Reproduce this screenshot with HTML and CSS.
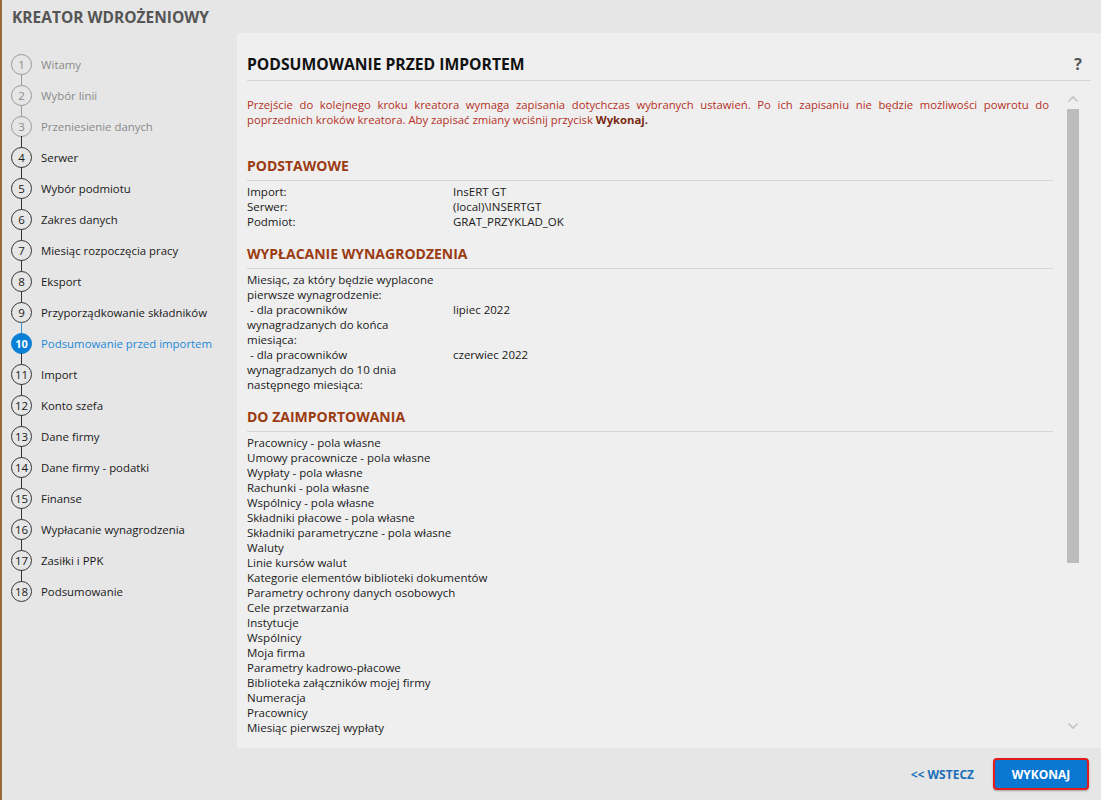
FILE: index.html
```html
<!DOCTYPE html>
<html lang="pl">
<head>
  <meta charset="UTF-8" />
  <title>Kreator wdrożeniowy</title>
  <link rel="stylesheet" href="styles.css">
</head>
<body>
  <div class="app">
    <header class="titlebar">KREATOR WDROŻENIOWY</header>

    <nav class="sidebar">
      <ul class="steps">
        <li class="step done"><span class="num">1</span>Witamy</li>
        <li class="step done"><span class="num">2</span>Wybór linii</li>
        <li class="step done last-done"><span class="num">3</span>Przeniesienie danych</li>
        <li class="step"><span class="num">4</span>Serwer</li>
        <li class="step"><span class="num">5</span>Wybór podmiotu</li>
        <li class="step"><span class="num">6</span>Zakres danych</li>
        <li class="step"><span class="num">7</span>Miesiąc rozpoczęcia pracy</li>
        <li class="step"><span class="num">8</span>Eksport</li>
        <li class="step before-active"><span class="num">9</span>Przyporządkowanie składników</li>
        <li class="step active"><span class="num">10</span>Podsumowanie przed importem</li>
        <li class="step"><span class="num">11</span>Import</li>
        <li class="step"><span class="num">12</span>Konto szefa</li>
        <li class="step"><span class="num">13</span>Dane firmy</li>
        <li class="step"><span class="num">14</span>Dane firmy - podatki</li>
        <li class="step"><span class="num">15</span>Finanse</li>
        <li class="step"><span class="num">16</span>Wypłacanie wynagrodzenia</li>
        <li class="step"><span class="num">17</span>Zasiłki i PPK</li>
        <li class="step"><span class="num">18</span>Podsumowanie</li>
      </ul>
    </nav>

    <main class="panel">
      <div class="panel-head">
        <h2>PODSUMOWANIE PRZED IMPORTEM</h2>
        <span class="help">?</span>
      </div>

      <div class="panel-body">
        <div class="scroll">
          <p class="notice">Przejście do kolejnego kroku kreatora wymaga zapisania dotychczas wybranych ustawień. Po ich zapisaniu nie będzie możliwości powrotu do poprzednich kroków kreatora. Aby zapisać zmiany wciśnij przycisk <strong>Wykonaj.</strong></p>

          <section class="group">
            <h3>PODSTAWOWE</h3>
            <div class="row"><span class="key">Import:</span><span class="val">InsERT GT</span></div>
            <div class="row"><span class="key">Serwer:</span><span class="val">(local)\INSERTGT</span></div>
            <div class="row"><span class="key">Podmiot:</span><span class="val">GRAT_PRZYKLAD_OK</span></div>
          </section>

          <section class="group">
            <h3>WYPŁACANIE WYNAGRODZENIA</h3>
            <div class="row"><span class="key">Miesiąc, za który będzie wyplacone pierwsze wynagrodzenie:</span><span class="val"></span></div>
            <div class="row"><span class="key">&nbsp;- dla pracowników wynagradzanych do końca miesiąca:</span><span class="val">lipiec 2022</span></div>
            <div class="row"><span class="key">&nbsp;- dla pracowników wynagradzanych do 10 dnia następnego miesiąca:</span><span class="val">czerwiec 2022</span></div>
          </section>

          <section class="group">
            <h3>DO ZAIMPORTOWANIA</h3>
            <ul class="items">
              <li>Pracownicy - pola własne</li>
              <li>Umowy pracownicze - pola własne</li>
              <li>Wypłaty - pola własne</li>
              <li>Rachunki - pola własne</li>
              <li>Wspólnicy - pola własne</li>
              <li>Składniki płacowe - pola własne</li>
              <li>Składniki parametryczne - pola własne</li>
              <li>Waluty</li>
              <li>Linie kursów walut</li>
              <li>Kategorie elementów biblioteki dokumentów</li>
              <li>Parametry ochrony danych osobowych</li>
              <li>Cele przetwarzania</li>
              <li>Instytucje</li>
              <li>Wspólnicy</li>
              <li>Moja firma</li>
              <li>Parametry kadrowo-płacowe</li>
              <li>Biblioteka załączników mojej firmy</li>
              <li>Numeracja</li>
              <li>Pracownicy</li>
              <li>Miesiąc pierwszej wypłaty</li>
            </ul>
          </section>
        </div>

        <div class="scrollbar">
          <svg class="arrow" width="12" height="8" viewBox="0 0 12 8"><path d="M1.5 6.5 L6 2 L10.5 6.5" fill="none" stroke="#c4c4c4" stroke-width="1.6"/></svg>
          <div class="track"><div class="thumb"></div></div>
          <svg class="arrow" width="12" height="8" viewBox="0 0 12 8"><path d="M1.5 1.5 L6 6 L10.5 1.5" fill="none" stroke="#c4c4c4" stroke-width="1.6"/></svg>
        </div>
      </div>
    </main>

    <footer class="footer">
      <a class="back" href="#">&lt;&lt; WSTECZ</a>
      <button class="run">WYKONAJ</button>
    </footer>
  </div>
</body>
</html>
```

FILE: styles.css
```css
* {
  box-sizing: border-box;
  margin: 0;
  padding: 0;
}

body {
  font-family: 'Open Sans', 'Noto Sans', sans-serif;
  background: #e6e6e6;
  color: #1a1a1a;
}

.app {
  width: 1101px;
  height: 800px;
  display: grid;
  grid-template-columns: 235px 1fr;
  grid-template-rows: 33px 1fr 52px;
  border-left: 2px solid #9a6a3a;
  overflow: hidden;
}

.titlebar {
  grid-column: 1 / 3;
  font-size: 15.5px;
  font-weight: bold;
  color: #555;
  padding: 7px 0 0 10px;
  line-height: 20px;
}

.sidebar {
  grid-row: 2 / 4;
  padding-top: 16px;
}

.steps {
  list-style: none;
}

.step {
  position: relative;
  display: flex;
  align-items: center;
  height: 31px;
  padding-left: 9px;
  font-size: 11.4px;
  color: #1a1a1a;
}

.num {
  width: 21px;
  height: 21px;
  border: 1.3px solid #333;
  border-radius: 50%;
  display: flex;
  align-items: center;
  justify-content: center;
  font-size: 11.5px;
  margin-right: 9px;
  background: #e6e6e6;
}

.step:not(:last-child) .num::after {
  content: '';
  position: absolute;
  left: 19px;
  top: 25px;
  width: 1.3px;
  height: 12px;
  background: #333;
}

.step.done {
  color: #8a8a8a;
}

.step.done .num {
  border-color: #999;
  color: #8a8a8a;
}

.step.done .num::after {
  background: #999;
}

.step.last-done .num::after {
  background: #333;
}

.step.before-active .num::after {
  background: #3a8fd0;
}

.step.active {
  color: #1e88d8;
}

.step.active .num {
  background: #0a7fd6;
  border-color: #0a7fd6;
  color: #fff;
  font-weight: bold;
  font-size: 11px;
}

.panel {
  background: #efefef;
  display: flex;
  flex-direction: column;
  min-height: 0;
}

.panel-head {
  display: flex;
  justify-content: space-between;
  align-items: center;
  margin: 0 10px;
  padding: 22px 0 7px;
  border-bottom: 1px solid #d6d6d6;
}

.panel-head h2 {
  font-size: 15.7px;
  line-height: 18px;
  font-weight: bold;
  color: #111;
}

.help {
  font-size: 16px;
  font-weight: bold;
  color: #555;
  line-height: 18px;
  margin-right: 9px;
}

.panel-body {
  flex: 1;
  display: flex;
  min-height: 0;
  padding-bottom: 10px;
}

.scroll {
  width: 816px;
  padding-left: 10px;
  overflow: hidden;
}

.notice {
  margin-top: 16px;
  width: 802px;
  font-size: 11.3px;
  line-height: 15px;
  color: #b5301f;
  text-align: justify;
}

.notice strong {
  color: #7a2a12;
}

.group {
  margin-top: 16px;
}

.group:first-of-type {
  margin-top: 30px;
}

.group h3 {
  font-size: 14px;
  line-height: 18px;
  font-weight: bold;
  color: #9b3b12;
  padding-bottom: 5px;
  border-bottom: 1px solid #d6d6d6;
  margin-bottom: 3px;
}

.row {
  display: flex;
  font-size: 11.5px;
  line-height: 15px;
}

.key {
  width: 206px;
  padding-right: 18px;
}

.items {
  list-style: none;
  font-size: 11.5px;
  line-height: 15px;
}

.scrollbar {
  width: 48px;
  display: flex;
  flex-direction: column;
  align-items: center;
  padding: 14px 0 0;
}

.arrow {
  display: block;
  margin-left: -8px;
}

.track {
  height: 454px;
  margin: 6px 0 159px;
  margin-left: -8px;
}

.thumb {
  width: 12px;
  height: 454px;
  background: #bcbcbc;
}

.footer {
  display: flex;
  justify-content: flex-end;
  align-items: center;
  gap: 19px;
  padding-right: 12px;
}

.back {
  font-size: 12px;
  font-weight: bold;
  color: #1a6fb8;
  text-decoration: none;
}

.run {
  width: 96px;
  height: 32px;
  background: #0a78d2;
  border: 2px solid #e51c1c;
  border-radius: 4px;
  color: #fff;
  font-family: inherit;
  font-size: 12px;
  font-weight: bold;
  box-shadow: 0 1px 2px rgba(0, 0, 0, 0.3);
}
```
